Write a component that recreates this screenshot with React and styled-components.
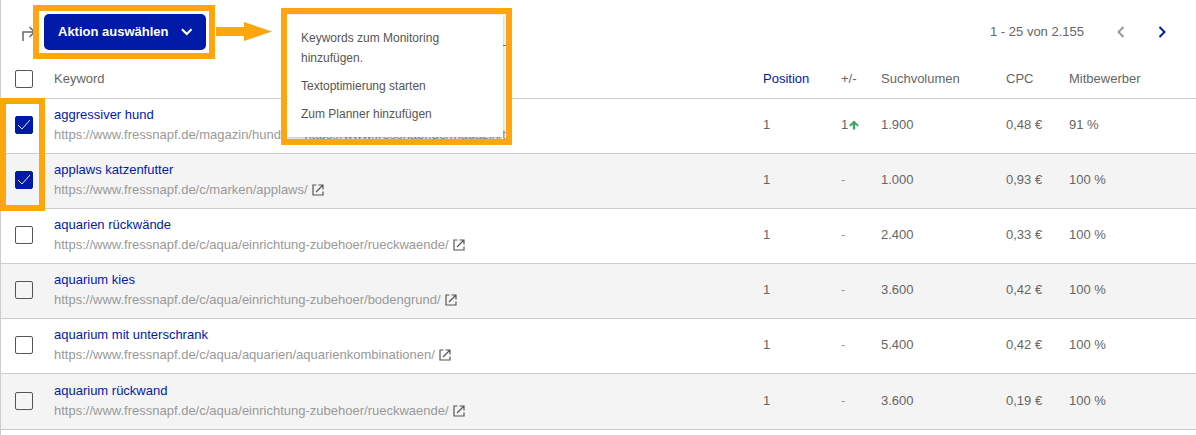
import styled, { createGlobalStyle } from 'styled-components';

const rows = [
  {
    keyword: 'aggressiver hund',
    url: 'https://www.fressnapf.de/magazin/hund/e',
    checked: true,
    change: '1',
    volume: '1.900',
    cpc: '0,48 €',
    competition: '91 %',
    covered: true,
  },
  {
    keyword: 'applaws katzenfutter',
    url: 'https://www.fressnapf.de/c/marken/applaws/',
    checked: true,
    volume: '1.000',
    cpc: '0,93 €',
    competition: '100 %',
  },
  {
    keyword: 'aquarien rückwände',
    url: 'https://www.fressnapf.de/c/aqua/einrichtung-zubehoer/rueckwaende/',
    volume: '2.400',
    cpc: '0,33 €',
    competition: '100 %',
  },
  {
    keyword: 'aquarium kies',
    url: 'https://www.fressnapf.de/c/aqua/einrichtung-zubehoer/bodengrund/',
    volume: '3.600',
    cpc: '0,42 €',
    competition: '100 %',
  },
  {
    keyword: 'aquarium mit unterschrank',
    url: 'https://www.fressnapf.de/c/aqua/aquarien/aquarienkombinationen/',
    volume: '5.400',
    cpc: '0,42 €',
    competition: '100 %',
  },
  {
    keyword: 'aquarium rückwand',
    url: 'https://www.fressnapf.de/c/aqua/einrichtung-zubehoer/rueckwaende/',
    volume: '3.600',
    cpc: '0,19 €',
    competition: '100 %',
  },
];

const ExternalIcon = () => (
  <svg width="12" height="12" viewBox="0 0 12 12" fill="none" stroke="#555" strokeWidth="1.2" aria-hidden="true">
    <path d="M4.500 1H1v10h10V7.500" />
    <path d="M6.500 1H11v4.500M11 1L4 8" />
  </svg>
);

function KeywordRow({ data, first }) {
  return (
    <tr>
      <CheckCell>
        {first && <RowsHighlight />}
        <Checkbox defaultChecked={data.checked} aria-label={data.keyword} />
      </CheckCell>
      <td>
        <KeywordLink href="#keyword">{data.keyword}</KeywordLink>
        <UrlLine>
          <UrlLink href={data.url}>{data.url}</UrlLink>
          {!data.covered && <ExternalIcon />}
        </UrlLine>
      </td>
      <td>1</td>
      <td>
        {data.change ? (
          <Change>
            {data.change}
            <svg width="10" height="10" viewBox="0 0 10 10" fill="#3aa76d" aria-hidden="true">
              <path d="M5 .5L9.800 5.300 8.500 6.600 6.200 4.600V9.500H3.800V4.600L1.500 6.600.2 5.300z" />
            </svg>
          </Change>
        ) : (
          <Muted>-</Muted>
        )}
      </td>
      <td>{data.volume}</td>
      <td>{data.cpc}</td>
      <td>{data.competition}</td>
    </tr>
  );
}

export default function App() {
  return (
    <Page>
      <GlobalStyle />
      <Toolbar>
        <RedirectIcon width="15" height="18" viewBox="0 0 15 18" fill="none" stroke="#666" strokeWidth="1.5" aria-hidden="true">
          <path d="M2 18V9h11M8.500 4l5 5-5 5" />
        </RedirectIcon>
        <ButtonHighlight>
          <ActionButton type="button">
            Aktion auswählen
            <svg width="12" height="8" viewBox="0 0 12 8" fill="none" stroke="#fff" strokeWidth="2.2" aria-hidden="true">
              <path d="M1 1l5 5 5-5" />
            </svg>
          </ActionButton>
        </ButtonHighlight>
        <Arrow width="57" height="20" viewBox="0 0 57 20" fill="#ffa510" aria-hidden="true">
          <path d="M0 5h28V0l28 9.500L28 19v-5H0z" />
        </Arrow>
        <MenuHighlight>
          <CoveredText aria-hidden="true">https://www.fressnapf.de/magazin/t</CoveredText>
          <Menu>
            <MenuItem type="button">Keywords zum Monitoring hinzufügen.</MenuItem>
            <MenuItem type="button">Textoptimierung starten</MenuItem>
            <MenuItem type="button">Zum Planner hinzufügen</MenuItem>
          </Menu>
        </MenuHighlight>
        <Pager aria-label="Seiten">
          <span>1 - 25 von 2.155</span>
          <PagerButton type="button" aria-label="Zurück" disabled>
            <svg width="8" height="12" viewBox="0 0 8 12" fill="none" stroke="currentColor" strokeWidth="2">
              <path d="M6.500 1l-5 5 5 5" />
            </svg>
          </PagerButton>
          <PagerButton type="button" aria-label="Weiter">
            <svg width="8" height="12" viewBox="0 0 8 12" fill="none" stroke="currentColor" strokeWidth="2">
              <path d="M1.500 1l5 5-5 5" />
            </svg>
          </PagerButton>
        </Pager>
      </Toolbar>
      <Table>
        <colgroup>
          <col width="53" />
          <col />
          <col width="78" />
          <col width="40" />
          <col width="125" />
          <col width="63" />
          <col width="127" />
        </colgroup>
        <thead>
          <tr>
            <CheckCell as="th">
              <Checkbox aria-label="Alle auswählen" />
            </CheckCell>
            <th>Keyword</th>
            <SortedHeader>Position</SortedHeader>
            <th>+/-</th>
            <th>Suchvolumen</th>
            <th>CPC</th>
            <th>Mitbewerber</th>
          </tr>
        </thead>
        <tbody>
          {rows.map((row, i) => (
            <KeywordRow key={row.keyword} data={row} first={i === 0} />
          ))}
        </tbody>
      </Table>
    </Page>
  );
}

const GlobalStyle = createGlobalStyle`
  * {
    box-sizing: border-box;
  }

  body {
    margin: 0;
    background: #fff;
    color: #666;
    font: 13px/20px "Liberation Sans", Arial, sans-serif;
  }

  button {
    font: inherit;
    cursor: pointer;
  }

  a {
    text-decoration: none;
  }
`;

const Page = styled.main`
  min-height: 100vh;
  border-left: 1px solid #ccc;
`;

const Toolbar = styled.div`
  position: relative;
  display: flex;
  align-items: center;
  height: 59px;
  padding: 5px 20px 0;
`;

const RedirectIcon = styled.svg`
  flex: none;
`;

const ButtonHighlight = styled.div`
  flex: none;
  margin-left: -3px;
  border: 6px solid #ffa510;
  padding: 3px 3px 3px 5px;
  background: #fff;
`;

const ActionButton = styled.button`
  display: flex;
  align-items: center;
  gap: 12px;
  width: 162px;
  height: 36px;
  padding: 0 14px;
  border: 0;
  border-radius: 5px;
  background: #001aa8;
  color: #fff;
  font-weight: 700;
  white-space: nowrap;
`;

const Arrow = styled.svg`
  flex: none;
  margin-left: 1px;
`;

/* opened menu, floats over the table */
const MenuHighlight = styled.div`
  position: absolute;
  z-index: 2;
  top: 8px;
  left: 280px;
  width: 231px;
  padding: 1px 3px 2px 0;
  border: 6px solid #ffa510;
  background: #fff;
  overflow: hidden;

  &::before {
    content: '';
    position: absolute;
    top: 31px;
    right: 0;
    width: 3px;
    height: 1px;
    background: #777;
  }
`;

/* only its lower edge shows below the menu */
const CoveredText = styled.span`
  position: absolute;
  right: 0;
  bottom: -6px;
  color: #999;
  white-space: nowrap;
`;

const Menu = styled.div`
  position: relative;
  display: flex;
  flex-direction: column;
  gap: 8px;
  padding: 13px 14px;
  background: #fff;
  box-shadow: 0 1px 4px rgba(0, 0, 0, 0.3);
`;

const MenuItem = styled.button`
  max-width: 160px;
  padding: 0;
  border: 0;
  background: none;
  color: #555;
  font-size: 12px;
  line-height: 20px;
  text-align: left;
`;

const Pager = styled.nav`
  display: flex;
  align-items: center;
  margin-left: auto;
  padding-right: 10px;
`;

const PagerButton = styled.button`
  display: flex;
  margin-left: 33px;
  padding: 0;
  border: 0;
  background: none;
  color: #001aa8;

  &:disabled {
    color: #999;
  }
`;

const Table = styled.table`
  width: 100%;
  border-collapse: separate;
  border-spacing: 0;
  table-layout: fixed;

  th,
  td {
    padding: 0;
    border-bottom: 1px solid #ccc;
    font-weight: 400;
    text-align: left;
    white-space: nowrap;
  }

  th {
    height: 40px;
  }

  td {
    height: 55px;
    padding-bottom: 2px;
  }

  tr:last-child td {
    height: 56px;
  }

  tbody tr:nth-child(even) {
    background: #f4f4f4;
  }
`;

const CheckCell = styled.td`
  position: relative;

  && {
    padding-left: 14px;
  }
`;

const SortedHeader = styled.th`
  color: #001aa8;
`;

const Checkbox = styled.input.attrs({ type: 'checkbox' })`
  display: block;
  appearance: none;
  width: 18px;
  height: 18px;
  margin: 0;
  border: 1px solid #555;
  border-radius: 2px;

  &:checked {
    border-color: #001aa8;
    background: #001aa8
      url("data:image/svg+xml,%3Csvg xmlns='http://www.w3.org/2000/svg' viewBox='0 0 16 16' fill='none' stroke='white' stroke-width='.9'%3E%3Cpath d='M2 8l4 4 8-9'/%3E%3C/svg%3E");
  }
`;

/* frame around the two ticked rows */
const RowsHighlight = styled.div`
  position: absolute;
  z-index: 1;
  top: -1px;
  left: -1px;
  width: 45px;
  height: 113px;
  border: 6px solid #ffa510;
  pointer-events: none;
`;

const KeywordLink = styled.a`
  display: block;
  color: #001aa8;
`;

const UrlLine = styled.div`
  display: flex;
  align-items: center;
  gap: 4px;
`;

const UrlLink = styled.a`
  color: #999;
`;

const Change = styled.span`
  display: flex;
  align-items: center;
  gap: 1px;
`;

const Muted = styled.span`
  color: #999;
`;
